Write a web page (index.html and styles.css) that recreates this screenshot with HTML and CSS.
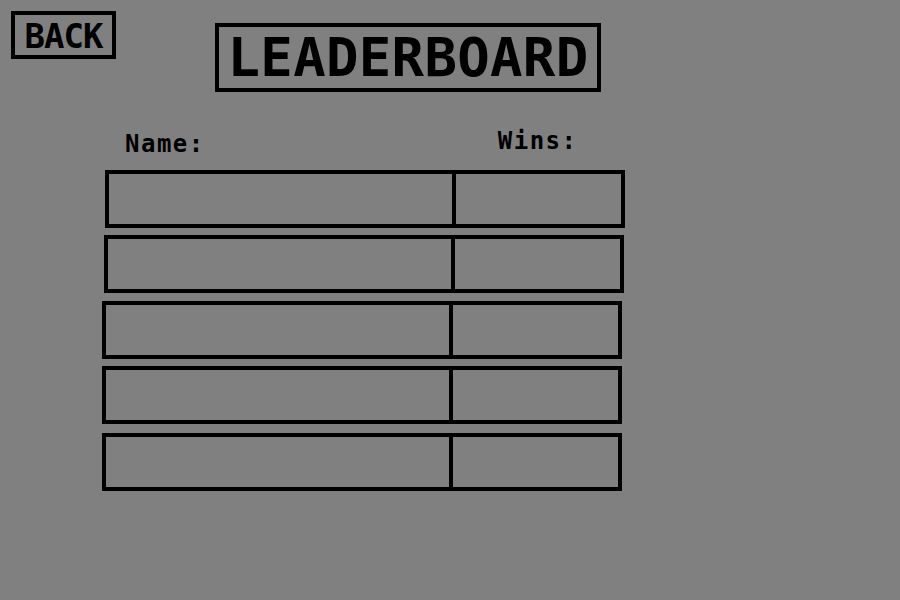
FILE: index.html
```html
<!DOCTYPE html>
<html>
<head>
<meta charset="utf-8">
<title>Leaderboard</title>
<link rel="stylesheet" href="styles.css">
</head>
<body>
  <header class="top">
    <div class="back">BACK</div>
    <h1 class="title">LEADERBOARD</h1>
  </header>
  <section class="board">
    <div class="labels">
      <span class="label name-label">Name:</span>
      <span class="label wins-label">Wins:</span>
    </div>
    <div class="rows">
      <div class="row r1"><div class="cell name"></div><div class="cell wins"></div></div>
      <div class="row r2"><div class="cell name"></div><div class="cell wins"></div></div>
      <div class="row r3"><div class="cell name"></div><div class="cell wins"></div></div>
      <div class="row"><div class="cell name"></div><div class="cell wins"></div></div>
      <div class="row r5"><div class="cell name"></div><div class="cell wins"></div></div>
    </div>
  </section>
</body>
</html>
```

FILE: styles.css
```css
* { box-sizing: border-box; }

html, body {
  margin: 0;
  padding: 0;
  background: #808080;
}

body {
  width: 900px;
  height: 600px;
  font-family: "DejaVu Sans Mono", "Liberation Mono", monospace;
  font-weight: bold;
  color: #000;
  overflow: hidden;
}

.top {
  display: flex;
  align-items: flex-start;
  padding: 11px 0 0 11px;
}

.back {
  width: 105px;
  height: 48px;
  border: 4px solid #000;
  font-size: 34px;
  line-height: 42px;
  letter-spacing: -1px;
  text-align: center;
}

.title {
  margin: 12px 0 0 99px;
  width: 386px;
  height: 69px;
  border: 4px solid #000;
  font-size: 54px;
  line-height: 61px;
  letter-spacing: 0.3px;
  font-weight: bold;
  text-align: center;
}

.board {
  display: flex;
  flex-direction: column;
}

.labels {
  display: flex;
  align-items: flex-start;
  margin-top: 35px;
  height: 43px;
}

.label {
  font-size: 24px;
  line-height: 28px;
  letter-spacing: 1.5px;
}

.name-label {
  margin-left: 125px;
  padding-top: 3px;
}

.wins-label {
  margin-left: 293px;
}

.rows {
  display: flex;
  flex-direction: column;
  gap: 7px;
}

.row {
  display: flex;
  width: 520px;
  height: 58px;
  margin-left: 102px;
  border: 4px solid #000;
}

.row.r1 { margin-left: 105px; }
.row.r2 { margin-left: 104px; }
.row.r3 { margin-top: 1px; }
.row.r5 { margin-top: 2px; }

.cell.name {
  width: 343px;
}

.cell.wins {
  flex: 1;
  border-left: 4px solid #000;
}
```
